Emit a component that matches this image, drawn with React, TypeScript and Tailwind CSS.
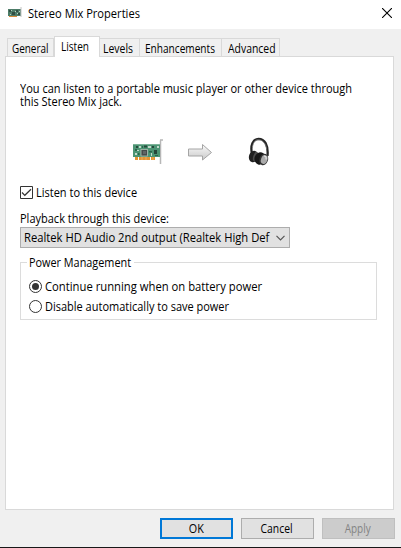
import type { ReactNode } from 'react';

function Label({ className = '', children }: { className?: string; children: ReactNode }) {
  return <span className={`block w-0 origin-left whitespace-nowrap leading-[13px] ${className}`}>{children}</span>;
}

function SoundCard({ className }: { className: string }) {
  return (
    <svg viewBox="0 0 32 26" className={className}>
      <path d="M28.500 25V1.500M28 1h3" fill="none" stroke="#b7b7b7" strokeWidth="1.500" />
      <path d="M1 5h27v13H1z" fill="#4d9474" />
      <path d="M1 5h27v1H1z" fill="#7bb297" />
      <path d="M3 18h3v3H3zM7 18h11v3H7zM19 18h4v3h-4z" fill="#e59432" />
      <path d="M10 18v3M14 18v3M21 18v3" stroke="#f3bd72" strokeWidth=".7" />
      <rect x="9" y="10.500" width="6.500" height="6.500" fill="#454c4a" stroke="#b2bfb5" strokeWidth=".8" />
      <path d="M4 7h2v2H4zM12 6.500h3v2h-3zM22 11h3v4h-3zM20 7h2v2h-2z" fill="#27483b" />
      <path d="M7 7h2v2H7zM16 7h3v2h-3zM3 14h2v2H3zM5 11h2v1H5zM25 7h2v2h-2zM19 14h1v3h-1z" fill="#c3d9cb" />
      <path d="M6 14h1.500v2H6zM10 7h1v2h-1zM17 12h3v1.500h-3zM3 10h2v2H3zM23 16h3v1h-3z" fill="#2b654b" />
      <path d="M11 12h3v3h-3z" fill="#606465" />
    </svg>
  );
}

function TitleIcon() {
  return (
    <svg viewBox="0 0 14 11" className="mt-[7px] ml-[8px] h-[11px] w-[14px]">
      <path d="M0 2h13v7H0z" fill="#4d7c68" />
      <path d="M1 9h8v1H1z" fill="#d88b39" />
      <path d="M1 3h2v2H1zM4 5h3v3H4zM8 3h2v2H8zM10 6h2v2h-2z" fill="#304f43" />
      <path d="M3 3h1v1H3zM7 4h1v1H7zM2 7h1v1H2zM9 6h1v1H9zM11 4h1v1h-1z" fill="#b4cebf" />
      <path d="M13 0v10" stroke="#c2c2c2" strokeWidth="1" />
    </svg>
  );
}

function Arrow() {
  return (
    <svg viewBox="0 0 26 18" className="ml-[23px] h-[18px] w-[26px]">
      <defs>
        <linearGradient id="arrowFill" x2="0" y2="1">
          <stop stopColor="#fafafa" />
          <stop offset="1" stopColor="#c9c9c9" />
        </linearGradient>
      </defs>
      <path d="M1.500 6H15.500V1.500L24.500 9.500l-9 7.500V13H1.500z" fill="url(#arrowFill)" stroke="#a5a5a5" />
    </svg>
  );
}

function Headphones() {
  return (
    <svg viewBox="0 0 22 30" className="ml-[35px] h-[30px] w-[22px]">
      <path d="M4 17C2 8 5 2 10.500 1.800c6 0 10 6 9 17" fill="none" stroke="#252525" strokeWidth="2.300" />
      <path d="M4.500 10C5.500 4.500 8 2.500 10.500 2.700c4 .2 7.500 4 8 9" fill="none" stroke="#888" strokeWidth=".7" />
      <ellipse cx="5.500" cy="19.500" rx="4.500" ry="5.800" transform="rotate(18 5.500 19.500)" fill="#202020" />
      <ellipse cx="7.500" cy="19.500" rx="2.200" ry="4.800" transform="rotate(18 7.500 19.500)" fill="#4b4b4b" />
      <ellipse cx="12" cy="21.500" rx="5.500" ry="6.200" transform="rotate(18 12 21.500)" fill="#171717" />
      <ellipse cx="15.700" cy="22.500" rx="4.300" ry="5.800" transform="rotate(20 15.700 22.500)" fill="#333" />
      <ellipse cx="16.200" cy="22.500" rx="3.200" ry="4.500" transform="rotate(20 16.200 22.500)" fill="#aaa" />
      <path d="M16 19c2 .2 2.500 1.500 2 3.500" fill="none" stroke="#e4e4e4" strokeWidth="1.200" />
    </svg>
  );
}

function Radio({ checked = false }: { checked?: boolean }) {
  return (
    <svg viewBox="0 0 13 13" className="h-[13px] w-[13px] shrink-0">
      <circle cx="6.500" cy="6.500" r="6" fill="#fff" stroke="#333" />
      {checked && <circle cx="6.500" cy="6.500" r="3.500" fill="#333" />}
    </svg>
  );
}

const tab = 'h-[18px] border-t border-r border-[#d9d9d9] pt-[3px]';

export default function App() {
  return (
    <div className="flex h-[548px] w-[401px] flex-col overflow-hidden border-b border-[#181818] bg-[#f0f0f0] font-['Open_Sans','Noto_Sans',sans-serif] text-[12px] text-black">
      <header className="flex h-[29px] shrink-0 items-start bg-white">
        <TitleIcon />
        <Label className="mt-[7px] ml-[6px] scale-x-[.926]">Stereo Mix Properties</Label>
        <svg viewBox="0 0 10 10" className="mt-[8px] mr-[9px] ml-auto h-[10px] w-[10px]">
          <path d="m0 0 10 10M10 0 0 10" stroke="#000" strokeWidth="1.100" />
        </svg>
      </header>

      <nav className="flex h-[27px] shrink-0 items-end pl-[7px]">
        <div className={`${tab} w-[47px] border-l pl-[4px]`}><Label className="scale-x-[.826]">General</Label></div>
        <div className="z-10 -mb-px h-[21px] w-[46px] border-x border-t border-[#d9d9d9] bg-white pt-[3px] pl-[6px]"><Label className="scale-x-[.838]">Listen</Label></div>
        <div className={`${tab} w-[40px] pl-[3px]`}><Label className="scale-x-[.87]">Levels</Label></div>
        <div className={`${tab} w-[82px] pl-[5px]`}><Label className="scale-x-[.842]">Enhancements</Label></div>
        <div className={`${tab} w-[58px] pl-[6px]`}><Label className="scale-x-[.868]">Advanced</Label></div>
      </nav>

      <main className="ml-[5px] h-[454px] w-[389px] shrink-0 border border-[#d9d9d9] bg-white pl-[14px]">
        <Label className="mt-[25px] scale-x-[.917]">
          You can listen to a portable music player or other device through
          <br />
          this Stereo Mix jack.
        </Label>

        <div className="mt-[29px] flex h-[30px] items-center pl-[112px]">
          <SoundCard className="h-[26px] w-[32px]" />
          <Arrow />
          <Headphones />
        </div>

        <div className="mt-[19px] flex h-[13px] items-center">
          <svg viewBox="0 0 13 13" className="h-[13px] w-[13px]">
            <path d="M.5.5h12v12H.5z" fill="#fff" stroke="#333" />
            <path d="m2 6.500 2.800 2.800L11 3.200" fill="none" stroke="#333" strokeWidth="1.200" />
          </svg>
          <Label className="ml-[3px] scale-x-[.917]">Listen to this device</Label>
        </div>

        <Label className="mt-[13px] scale-x-[.917]">Playback through this device:</Label>
        <div className="mt-[2px] flex h-[21px] w-[270px] items-center border border-[#adadad] bg-[#e1e1e1] pl-[3px]">
          <Label className="scale-x-[.935]">Realtek HD Audio 2nd output (Realtek High Def</Label>
          <svg viewBox="0 0 9 6" className="mr-[4px] ml-auto h-[6px] w-[9px]">
            <path d="m.5.8 4 4 4-4" fill="none" stroke="#555" strokeWidth="1.200" />
          </svg>
        </div>

        <fieldset className="mt-[8px] h-[64px] w-[357px]">
          <div className="flex h-[13px] items-center">
            <div className="h-px w-[7px] bg-[#dcdcdc]" />
            <Label className="ml-[2px] scale-x-[.905]">Power Management</Label>
            <div className="ml-[105px] h-px flex-1 bg-[#dcdcdc]" />
          </div>
          <div className="-mt-[7px] h-[58px] border-x border-b border-[#dcdcdc] pt-[18px] pl-[8px]">
            <div className="flex h-[13px] items-center"><Radio checked /><Label className="ml-[3px] scale-x-[.938]">Continue running when on battery power</Label></div>
            <div className="mt-[7px] flex h-[13px] items-center"><Radio /><Label className="ml-[3px] scale-x-[.916]">Disable automatically to save power</Label></div>
          </div>
        </fieldset>
      </main>

      <footer className="mt-[8px] flex gap-[8px] pl-[160px] leading-[13px]">
        <button className="flex h-[21px] w-[73px] items-center justify-center border-2 border-[#0078d7] bg-[#e1e1e1] pr-px"><span className="scale-x-[.898]">OK</span></button>
        <button className="flex h-[21px] w-[73px] items-center justify-center border border-[#adadad] bg-[#e1e1e1] pr-[2px]"><span className="scale-x-[.863]">Cancel</span></button>
        <button className="flex h-[21px] w-[73px] items-center justify-center border border-[#bfbfbf] bg-[#cccccc] pr-[2px] text-[#838383]"><span className="scale-x-[.83]">Apply</span></button>
      </footer>
    </div>
  );
}
